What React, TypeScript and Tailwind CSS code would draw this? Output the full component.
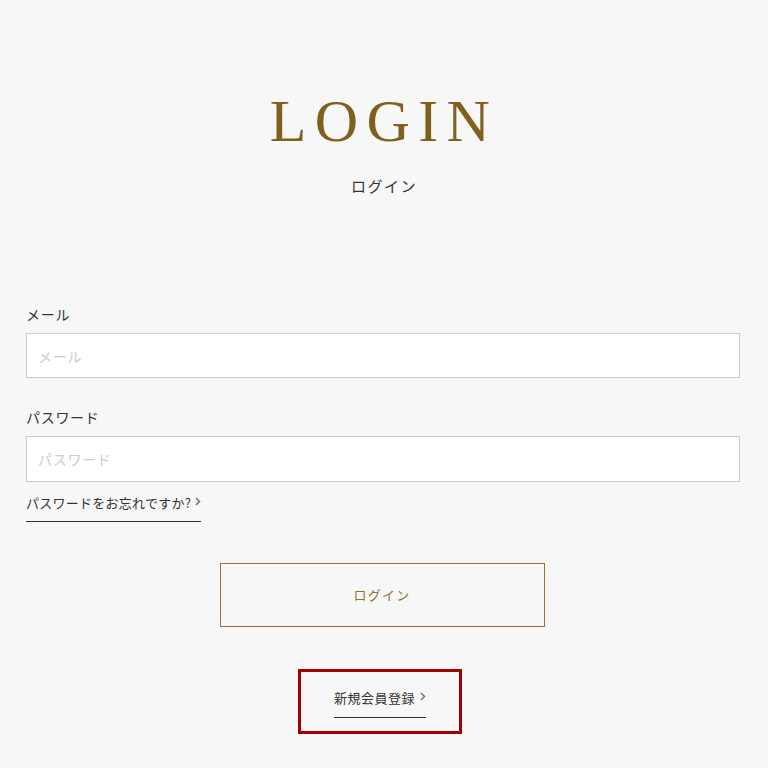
export default function App() {
  const jp = { fontFamily: '"Noto Sans CJK JP", "Noto Sans", sans-serif' };
  return (
    <div className="min-h-[768px] w-[768px] bg-[#f7f7f7] text-[#333]" style={jp}>
      {/* heading */}
      <div className="pt-[89px] flex flex-col items-center">
        <h1
          className="text-[60px] leading-[64px] tracking-[0.14em] text-[#80601c]"
          style={{ fontFamily: '"Liberation Serif", "Times New Roman", serif' }}
        >
          LOGIN
        </h1>
        <p className="mt-[23px] text-[15px] leading-[20px] tracking-[0.1em] text-[#333]">ログイン</p>
      </div>

      {/* form */}
      <div className="ml-[26px] w-[714px] mt-[108px]">
        <label className="block text-[14px] leading-[20px] tracking-[0.05em]">メール</label>
        <input
          placeholder="メール"
          className="mt-[9px] w-full h-[45px] bg-white border border-[#cfccc6] px-[11px] text-[14px] tracking-[0.05em] placeholder:text-[#cccccc] outline-none"
        />

        <label className="block mt-[29px] text-[14px] leading-[20px] tracking-[0.05em]">パスワード</label>
        <input
          type="text"
          placeholder="パスワード"
          className="mt-[9px] w-full h-[46px] bg-white border border-[#cfccc6] px-[11px] text-[14px] tracking-[0.05em] placeholder:text-[#cccccc] outline-none"
        />

        <div className="mt-[7px]">
          <a className="inline-flex items-center gap-[4px] pb-[8px] border-b border-[#333] text-[13px] leading-[20px] tracking-[0.02em] text-[#333]">
            パスワードをお忘れですか?
            <Chevron />
          </a>
        </div>

        <div className="flex justify-center mt-[41px]">
          <button className="w-[325px] h-[64px] border border-[#937434] text-[#8f7035] text-[13px] tracking-[0.1em] -translate-x-[1px]">
            ログイン
          </button>
        </div>

        <div className="flex justify-center mt-[42px]">
          <div className="w-[164px] h-[65px] border-[3px] border-[#a30000] flex items-start justify-center pt-[16px] -translate-x-[3px]">
            <a className="inline-flex items-center gap-[5px] pb-[9px] border-b border-[#333] text-[13px] leading-[20px] tracking-[0.04em] text-[#333]">
              新規会員登録
              <Chevron />
            </a>
          </div>
        </div>
      </div>
    </div>
  );
}

function Chevron() {
  return (
    <svg width="6" height="9" viewBox="0 0 6 9" className="mb-[4px]">
      <path d="M1 1l3.5 3.5L1 8" fill="none" stroke="#777" strokeWidth="1.6" />
    </svg>
  );
}
